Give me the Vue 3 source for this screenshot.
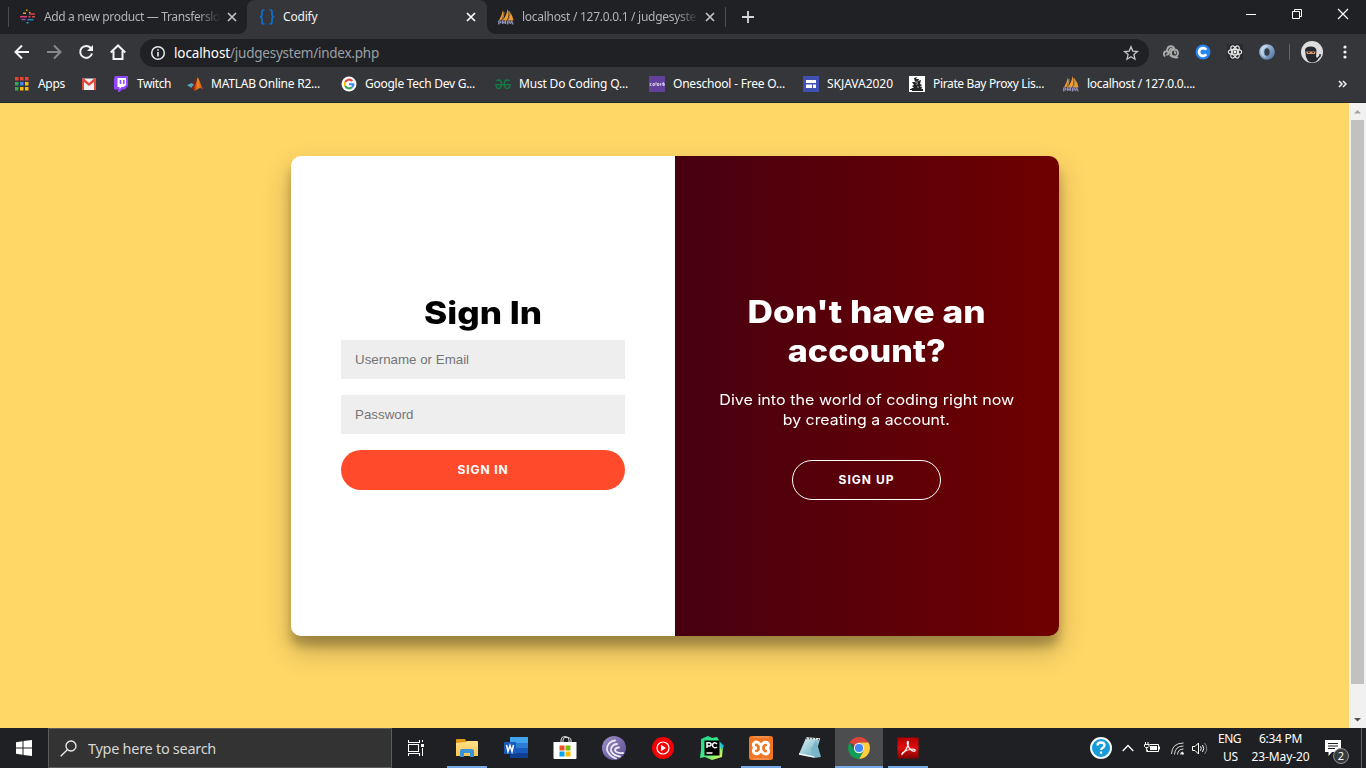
<script setup>
const spread = (el, width) => {
  const natural = el.getBoundingClientRect().width
  el.style.letterSpacing = (width - natural) / el.textContent.length + 'px'
}
const stretch = (el, width) => {
  el.style.display = 'inline-block'
  el.style.transform = `scaleX(${width / el.getBoundingClientRect().width})`
}
const vFit = { mounted: (el, { value, modifiers }) => (modifiers.wide ? stretch : spread)(el, value) }

const tabs = [
  { icon: 'transfer', title: 'Add a new product — Transferslo', width: 176, active: false },
  { icon: 'braces', title: 'Codify', width: 34.5, active: true },
  { icon: 'sails', title: 'localhost / 127.0.0.1 / judgesyste', width: 174, active: false }
]
const bookmarks = [
  { icon: 'apps', title: 'Apps', width: 27 },
  { icon: 'gmail', title: '', width: 0 },
  { icon: 'twitch', title: 'Twitch', width: 34 },
  { icon: 'matlab', title: 'MATLAB Online R2...', width: 109 },
  { icon: 'google', title: 'Google Tech Dev G...', width: 110 },
  { icon: 'geeks', title: 'Must Do Coding Q...', width: 109 },
  { icon: 'colorlib', title: 'Oneschool - Free O...', width: 112 },
  { icon: 'sites', title: 'SKJAVA2020', width: 66 },
  { icon: 'pirate', title: 'Pirate Bay Proxy Lis...', width: 111 },
  { icon: 'sails', title: 'localhost / 127.0.0....', width: 108 }
]
const extensions = ['swirls', 'bluec', 'react', 'ring']
const apps = [
  { icon: 'folder', open: true },
  { icon: 'word' },
  { icon: 'store' },
  { icon: 'torrent' },
  { icon: 'music' },
  { icon: 'pycharm' },
  { icon: 'xampp', open: true },
  { icon: 'notes' },
  { icon: 'chrome', open: true, active: true },
  { icon: 'acrobat', open: true }
]
</script>

<template>
  <div class="screen">
    <svg class="sprite" width="0" height="0">
      <defs>
        <linearGradient id="gFolder" x1="0" y1="0" x2="0" y2="1"><stop offset="0" stop-color="#ffe08a" /><stop offset="1" stop-color="#f8c750" /></linearGradient>
        <linearGradient id="gTorrent" x1="0" y1="0" x2="1" y2="1"><stop offset="0" stop-color="#9d90c8" /><stop offset="1" stop-color="#5b4a90" /></linearGradient>
        <linearGradient id="gNote" x1="0" y1="0" x2="1" y2="1"><stop offset="0" stop-color="#e4f6fa" /><stop offset="1" stop-color="#58a2b5" /></linearGradient>
        <linearGradient id="gAcro" x1="0" y1="0" x2="0" y2="1"><stop offset="0" stop-color="#b30000" /><stop offset=".5" stop-color="#e01010" /><stop offset="1" stop-color="#820000" /></linearGradient>
        <linearGradient id="gPy" x1="0" y1="0" x2="1" y2="1"><stop offset="0" stop-color="#21d789" /><stop offset=".5" stop-color="#3bea8a" /><stop offset="1" stop-color="#fcf84a" /></linearGradient>
        <linearGradient id="gMat" x1="0" y1="0" x2="1" y2="0"><stop offset="0" stop-color="#8c1d12" /><stop offset=".5" stop-color="#f6871f" /><stop offset="1" stop-color="#c43c14" /></linearGradient>
        <linearGradient id="gRing" x1="0" y1="0" x2="1" y2="1"><stop offset="0" stop-color="#c9daf0" /><stop offset="1" stop-color="#456c9d" /></linearGradient>
      </defs>
      <symbol id="transfer" viewBox="0 0 16 16">
        <g fill="none" stroke-width="1.500">
          <path d="M6 1.200h1.500M9 3.500h1.500M3 4.200h3" stroke="#e0a52a" /><path d="M9 5h6" stroke="#d8443c" />
          <path d="M0 7.700h7" stroke="#e0397c" /><path d="M8.500 7.700h2M12 7.700h3" stroke="#c9504c" />
          <path d="M1.500 10.500h4" stroke="#8557a8" /><path d="M7.500 10.700h6" stroke="#2388bd" /><path d="M6.500 13.700h2" stroke="#2f9ec9" />
        </g>
      </symbol>
      <symbol id="braces" viewBox="0 0 16 16">
        <path d="M5.500 1H4.500Q3 1 3 2.800V5.500Q3 7.500 1 7.800 3 8.200 3 10V13Q3 14.800 4.500 14.800H5.500M10.500 1h1Q13 1 13 2.800V5.500Q13 7.500 15 7.800 13 8.200 13 10V13Q13 14.800 11.500 14.800H10.500" fill="none" stroke="#0b6fd0" stroke-width="1.700" />
      </symbol>
      <symbol id="sails" viewBox="0 0 16 16">
        <path d="M5 1Q6 6 3.500 11L1 11.500Q4 6 5 1M9.500 0Q12 6 9 11.500H4.500Q9 6 9.500 0M12 3Q15 7 15.500 11.500H10.500Q13 7 12 3" fill="#f29a2e" />
        <path d="M6 3Q6 7 4.500 10.500M11 2Q13 6 10.500 11" stroke="#ffc36b" fill="none" stroke-width=".7" />
        <path d="M.7 15.500V12h1.500q1.500 1 0 2H1M4.500 15v-3l1.500 2 1.500-2v3M9.500 15.500V12h1.500q1.500 1 0 2h-1M12.500 15l1.200-3 1.500 3.500" fill="none" stroke="#8f91b8" stroke-width="1.200" />
      </symbol>
      <symbol id="apps" viewBox="0 0 14 14">
        <path d="M0 0h3.500v3.500H0zM5 0h3.500v3.500H5zM10 0h3.500v3.500h-3.500z" fill="#ea4335" /><path d="M0 5h3.500v3.500H0zM0 10h3.500v3.500H0z" fill="#34a853" /><path d="M5 5h3.500v3.500H5z" fill="#4285f4" /><path d="M10 5h3.500v3.500h-3.500zM5 10h3.500v3.500H5zM10 10h3.500v3.500h-3.500z" fill="#f5b912" />
      </symbol>
      <symbol id="gmail" viewBox="0 0 14 14">
        <rect y="1.500" width="14" height="11.500" rx="1" fill="#f1f1f1" /><path d="M0 13V2.500Q1 .5 2.500 2L7 6l4.500-4Q13 .5 14 2.500V13h-2V5L7 9 2 5v8z" fill="#e04a3d" />
      </symbol>
      <symbol id="twitch" viewBox="0 0 16 16">
        <path d="M2 0h13v10l-3.500 3.500H9L6.500 16H5v-2.500H1V3z" fill="#9147ff" /><path d="M4.500 2H13v7l-2.500 2H8.500L6.500 13v-2h-2z" fill="#fff" /><path d="M7.500 4v4M10.800 4v4" stroke="#9147ff" stroke-width="1.600" />
      </symbol>
      <symbol id="matlab" viewBox="0 0 16 16">
        <path d="M0 9l5-2 2.500 2L4.500 12z" fill="#4daec0" /><path d="M5 7Q8 5 10.500 1L8 11 5.500 14 4.500 11 7 9z" fill="#7b2419" /><path d="M10.500 1Q12 3 16 13.500 13.500 11 11.500 12.500T7.500 15L6 12Q9 10 10.500 1" fill="url(#gMat)" />
      </symbol>
      <symbol id="google" viewBox="0 0 16 16">
        <circle cx="8" cy="8" r="7.500" fill="#fff" /><g fill="none" stroke-width="2.100">
          <path d="M11.300 5A4.400 4.400 0 0 0 4.200 6" stroke="#ea4335" /><path d="M4.200 6a4.400 4.400 0 0 0 0 4" stroke="#fbbc05" /><path d="M4.200 10a4.400 4.400 0 0 0 6.800 1.300" stroke="#34a853" /><path d="M11 11.300A4 4 0 0 0 12.400 8.200H8" stroke="#4285f4" /></g>
      </symbol>
      <symbol id="geeks" viewBox="0 0 16 16"><path d="M1.500 5Q2 4 4 4 6.700 4.500 6.700 8T4 12.500Q1 12.500 1 8.700H15Q15 12.500 12 12.500 9.300 12 9.300 8T12 4Q14 4 14.500 5" fill="none" stroke="#147846" stroke-width="1.400" /></symbol>
      <symbol id="colorlib" viewBox="0 0 16 16"><rect width="16" height="16" fill="#61419a" /><path d="M2.500 7.500H1.200v2h1.300M4 7.500h1.400v2H4zM7 6v3.500M8.500 7.500H10v2H8.500zM11.500 9.500v-2H12M13.200 7v2.500M14.300 6v3.500h1v-2h-1" fill="none" stroke="#e8e2f1" stroke-width=".8" /></symbol>
      <symbol id="sites" viewBox="0 0 16 16"><rect width="16" height="16" fill="#3f51b5" /><path d="M3 4h10v3H3zM3 8.500h6V12H3zM10 8.500h3V12h-3z" fill="#fff" /></symbol>
      <symbol id="pirate" viewBox="0 0 16 16"><rect width="16" height="16" fill="#fff" /><path d="M5 2l3-1-1 2 3 0-1 2 3-1-1 4 2 1-2 2 2 0-1 3H4L2 12l3 0-2-2 2-1-2-3 3 0z" fill="#222" /><path d="M1 13.500h13M3 14.500h11" stroke="#222" /><path d="M6 6l3 0M8 11l2 0M7 8.500l2-1" stroke="#aaa" /></symbol>
      <symbol id="swirls" viewBox="0 0 16 16">
        <g fill="none" stroke="#aaa" stroke-width="1.900"><path d="M2 12.500Q-.3 9.500 2 7.500 4.500 6.500 5.500 8.500 5.500 11 3.200 10.500M4 6.500Q4.500 2 8.500 2.300 11.500 3 11 5.500L7.500 5Q5.500 7.500 7.500 9.500" /><circle cx="11.500" cy="9" r="3.500" /><path d="M11 8q2 0 1 2M7 10.500q1 2.500 4 2.500 3 1 4 0" /></g>
      </symbol>
      <symbol id="bluec" viewBox="0 0 16 16"><circle cx="8" cy="8" r="7.500" fill="#2686ef" /><path d="M11.200 5.800A3.900 3.900 0 1 0 11.200 10.200" fill="none" stroke="#fff" stroke-width="2.700" /></symbol>
      <symbol id="react" viewBox="0 0 16 16"><rect width="16" height="16" fill="#2a2b2e" /><g fill="none" stroke="#e4e4e4" stroke-width="1.150"><ellipse cx="8" cy="8" rx="6.700" ry="2.700" /><ellipse cx="8" cy="8" rx="6.700" ry="2.700" transform="rotate(60 8 8)" /><ellipse cx="8" cy="8" rx="6.700" ry="2.700" transform="rotate(120 8 8)" /></g><circle cx="8" cy="8" r="1.400" fill="#fff" /></symbol>
      <symbol id="ring" viewBox="0 0 16 16"><circle cx="8" cy="8" r="7.800" fill="url(#gRing)" /><path d="M7 1Q1 3 2 9 3 13 8 14 4 11 4.500 7 5 3 9 3" fill="#d4e2f2" opacity=".65" /><ellipse cx="8" cy="8" rx="2.600" ry="3.800" fill="#333b48" /></symbol>
      <symbol id="x" viewBox="0 0 10 10"><path d="M1 1l8 8M9 1L1 9" stroke="currentColor" stroke-width="1.700" /></symbol>

      <symbol id="folder" viewBox="0 0 24 24"><path d="M1 4q0-1 1-1h8l1 2h11v4H1z" fill="#df9818" /><path d="M1 7l10-1 1-1h10q1 0 1 1v14H1z" fill="url(#gFolder)" /><path d="M5 21v-6q0-2 2-2h10q2 0 2 2v6h-4v-4H9v4z" fill="#3b91d7" /></symbol>
      <symbol id="word" viewBox="0 0 24 24"><path d="M6 1h18v6H6z" fill="#41a5ee" /><path d="M6 7h18v5H6z" fill="#2b7cd3" /><path d="M6 12h18v5H6z" fill="#185abd" /><path d="M6 17h18v5H6z" fill="#103f91" /><rect y="6" width="12" height="12" rx="1" fill="#185abd" /><path d="M2.500 9l1.500 6.500L6 9.500l2 6L9.500 9" fill="none" stroke="#fff" stroke-width="1.500" /></symbol>
      <symbol id="store" viewBox="0 0 24 24"><path d="M8 6V4q0-3.500 4-3.500T16 4v2M10 6V4Q10 2 12 1.500 18 1 18 4v2" fill="none" stroke="#ddd" stroke-width="1" /><path d="M.5 6h23v16q0 1-1 1h-21q-1 0-1-1z" fill="#fff" /><path d="M6.500 9.500h5v5h-5z" fill="#f25022" /><path d="M12.500 9.500h5v5h-5z" fill="#7fba00" /><path d="M6.500 15.500h5v5h-5z" fill="#00a4ef" /><path d="M12.500 15.500h5v5h-5z" fill="#ffb900" /></symbol>
      <symbol id="torrent" viewBox="0 0 24 24"><circle cx="12" cy="12" r="12" fill="url(#gTorrent)" /><g fill="none" stroke="#eeeaf6" stroke-width="1.800" stroke-linecap="round"><path d="M13 4.500A8.500 8.500 0 0 0 5 14Q7 20 14 22.500M15 8A6 6 0 0 0 9 15Q12 20 18 20.500M17 11.500Q13 11.500 13 14.500 15 17.500 21 17" /></g></symbol>
      <symbol id="music" viewBox="0 0 24 24"><circle cx="12" cy="12" r="11" fill="#f50000" /><circle cx="12" cy="12" r="6" fill="none" stroke="#fff" stroke-width="1.200" /><path d="M10 8.700v6.600l5-3.300z" fill="#fff" /></symbol>
      <symbol id="pycharm" viewBox="0 0 24 24"><path d="M1 3L8 0l4 2 5-1 3 5 3 4-1 11-10 3-7-3-5 1 1-8z" fill="url(#gPy)" /><path d="M20 6l4 4-3 4z" fill="#07c3f2" /><rect x="4.500" y="4.500" width="15" height="15" /><path d="M7 12V6.800h2q2 0 2 1.600T9 10H7M17 8q-1-1.300-2.500-1.200-2 .4-2 2.500t2 2.500Q16 12 17 11M6.500 17h6" fill="none" stroke="#fff" stroke-width="1.500" /></symbol>
      <symbol id="xampp" viewBox="0 0 24 24"><rect width="24" height="24" rx="2.500" fill="#f07624" /><path d="M4 1h16M4 23h16" stroke="#f8a266" /><path d="M8 12Q4 12 4.500 8 6 5 9 6.500L12 9l3-2.500q3.500-1 4.500 2 .5 3.500-3.500 3.500 4 0 3.500 4-1.500 3-4.500 1.500L12 15l-3 2.500q-3.500 1-4.500-2Q4 12 8 12" fill="none" stroke="#fff" stroke-width="2.900" /><path d="M12 9v6" stroke="#fff" stroke-width="2.500" /></symbol>
      <symbol id="notes" viewBox="0 0 24 24"><path d="M8 2l14 1-5 18L1 18z" fill="url(#gNote)" /><path d="M18 4l5 17-7 1-3-9z" fill="#79b6c8" /><path d="M8 2l14 1M1 18l15 3" stroke="#f6ffff" stroke-width="1.300" /><path d="M8 2l1 1M11 2l1 1M14 2l1 1M17 2l1 1M20 3l1 1" stroke="#555" stroke-width="1.200" /></symbol>
      <symbol id="chrome" viewBox="0 0 24 24"><path d="M12 12L2.500 6.500A11 11 0 0 1 21.500 6.500H12z" fill="#db4437" /><path d="M21.500 6.500A11 11 0 0 1 12 23l4.500-8.500-.5-6.300-4-1.700z" fill="#ffcd40" /><path d="M2.500 6.500A11 11 0 0 0 12 23l4.700-8.500L12 17l-4.500-2.500z" fill="#0f9d58" /><circle cx="12" cy="12" r="5.200" fill="#f1f1f1" /><circle cx="12" cy="12" r="4.100" fill="#4285f4" /></symbol>
      <symbol id="acrobat" viewBox="0 0 24 24"><rect x="1.500" y="1.500" width="21" height="21" fill="url(#gAcro)" /><path d="M6 18Q10 15 12 9q1-4-.5-3.500-1 1.500 1.500 6T19 15q1-2-3-2Q11 13.500 7 16.500 5 18.500 6.500 18.700" fill="none" stroke="#fff" stroke-width="1.200" /></symbol>
    </svg>

    <header class="browser">
      <div class="tabstrip">
        <span class="divider"></span>
        <div v-for="t in tabs" :key="t.title" class="tab" :class="{ active: t.active }">
          <svg class="favicon" width="16" height="16"><use :href="'#' + t.icon" /></svg>
          <span class="title"><span v-fit="t.width">{{ t.title }}</span></span>
          <svg class="close" width="10" height="10"><use href="#x" /></svg>
        </div>
        <span class="divider"></span>
        <svg class="plus" width="12" height="12" viewBox="0 0 12 12"><path d="M6 0v12M0 6h12" stroke="#d5d7da" stroke-width="1.800" /></svg>
        <div class="window-buttons">
          <svg width="12" height="12" viewBox="0 0 12 12"><path d="M1 6.500h10" stroke="#fff" /></svg>
          <svg width="12" height="12" viewBox="0 0 12 12"><path d="M1.500 3.500h7v7h-7zM3.500 3.500v-2h7v7h-2" fill="none" stroke="#fff" /></svg>
          <svg width="12" height="12" viewBox="0 0 12 12"><path d="M1 1l10 10M11 1L1 11" stroke="#fff" stroke-width="1.200" /></svg>
        </div>
      </div>

      <div class="toolbar">
        <div class="nav">
          <svg width="16" height="16" viewBox="0 0 16 16"><path d="M15 8H2M8 1.500L1.500 8 8 14.500" fill="none" stroke="#f1f3f4" stroke-width="2" /></svg>
          <svg width="16" height="16" viewBox="0 0 16 16"><path d="M1 8h13M8 1.500L14.500 8 8 14.500" fill="none" stroke="#86888b" stroke-width="2" /></svg>
          <svg width="16" height="16" viewBox="0 0 16 16"><path d="M12.800 4A6 6 0 1 0 14 9.500" fill="none" stroke="#f1f3f4" stroke-width="2" /><path d="M15 1v6H9z" fill="#f1f3f4" /></svg>
          <svg width="16" height="16" viewBox="0 0 16 16"><path d="M.7 8.500L8 1.500l7.300 7M3.500 7v8h9V7" fill="none" stroke="#f1f3f4" stroke-width="2" /></svg>
        </div>
        <div class="address">
          <svg width="16" height="16" viewBox="0 0 16 16"><circle cx="8" cy="8" r="6.300" fill="none" stroke="#e8eaed" stroke-width="1.500" /><path d="M8 7v4.500M8 4.300v1.500" stroke="#e8eaed" stroke-width="1.600" /></svg>
          <span class="url"><span v-fit="56" class="host">localhost</span><span v-fit="149">/judgesystem/index.php</span></span>
          <svg width="16" height="16" viewBox="0 0 16 16"><path d="M8 1.800l1.800 4.300 4.700.4-3.600 3.100 1.100 4.600L8 11.800l-4 2.400 1.100-4.600L1.500 6.500l4.700-.4z" fill="none" stroke="#c5c7ca" stroke-width="1.300" /></svg>
        </div>
        <div class="extensions">
          <svg v-for="e in extensions" :key="e" width="16" height="16"><use :href="'#' + e" /></svg>
        </div>
        <span class="bar"></span>
        <svg class="avatar" width="22" height="22" viewBox="0 0 22 22"><circle cx="11" cy="11" r="11" fill="#dedede" /><path d="M4 9Q4.500 5.500 9.500 5.500q5.500 0 6 4l-.5 6 2 3-2 2q-5 2-8-.5L5 16z" fill="#26282c" /><path d="M5 10.500h9.500l-.5 2.500H6z" fill="#d9986c" /><path d="M7 11.500h1.500M11.500 11.500H13" stroke="#222" /><path d="M15.500 18.500l3.500-3.500v-2" stroke="#222" stroke-width="1.500" fill="none" /></svg>
        <svg class="dots" width="4" height="14" viewBox="0 0 4 14"><circle cx="2" cy="2" r="1.600" fill="#f1f3f4" /><circle cx="2" cy="7" r="1.600" fill="#f1f3f4" /><circle cx="2" cy="12" r="1.600" fill="#f1f3f4" /></svg>
      </div>

      <nav class="bookmarks">
        <a v-for="b in bookmarks" :key="b.title" :class="b.icon">
          <svg><use :href="'#' + b.icon" /></svg>
          <span v-if="b.title" v-fit="b.width">{{ b.title }}</span>
        </a>
        <svg class="more" width="9" height="8" viewBox="0 0 9 8"><path d="M1 1l3 3-3 3M5 1l3 3-3 3" fill="none" stroke="#f1f3f4" stroke-width="1.500" /></svg>
      </nav>
    </header>

    <main class="viewport">
      <div class="page">
        <div class="card">
          <form class="signin" @submit.prevent>
            <h1><span v-fit.wide="118">Sign In</span></h1>
            <input type="text" placeholder="Username or Email" />
            <input type="password" placeholder="Password" />
            <button type="button"><span v-fit="51">SIGN IN</span></button>
          </form>
          <section class="signup">
            <h1><span v-fit.wide="238">Don't have an</span><br /><span v-fit.wide="158">account?</span></h1>
            <p><span v-fit.wide="295">Dive into the world of coding right now</span><br /><span v-fit.wide="167">by creating a account.</span></p>
            <button type="button"><span v-fit="56">SIGN UP</span></button>
          </section>
        </div>
      </div>
      <div class="scrollbar">
        <svg width="17" height="17" viewBox="0 0 17 17"><path d="M5 10.500h7L8.500 7z" fill="#a3a3a3" /></svg>
        <div class="thumb"></div>
        <svg width="17" height="17" viewBox="0 0 17 17"><path d="M5 7h7l-3.500 3.500z" fill="#505050" /></svg>
      </div>
    </main>

    <footer class="taskbar">
      <div class="start"><svg width="16" height="16" viewBox="0 0 16 16"><path d="M0 2.200L6.500 1.300V7.500H0zM7.500 1.100L16 0v7.500H7.500zM0 8.500h6.500v6.200L0 13.800zM7.500 8.500H16V16l-8.500-1.100z" fill="#fff" /></svg></div>
      <div class="search">
        <svg width="17" height="17" viewBox="0 0 17 17"><circle cx="11" cy="6" r="5" fill="none" stroke="#eee" stroke-width="1.300" /><path d="M7.300 9.700L.7 16.300" stroke="#eee" stroke-width="1.300" /></svg>
        <span v-fit="128">Type here to search</span>
      </div>
      <div class="taskview"><svg width="16" height="16" viewBox="0 0 16 16"><path d="M.5 0v2.500h11V0M.5 16v-2.500h11V16M.5 4.500h10v7H.5z" fill="none" stroke="#fff" stroke-width="1.100" /><path d="M14.500 0v2M14.500 8v8" stroke="#fff" /><path d="M13 4h3v3h-3z" fill="#fff" /></svg></div>
      <div class="apps">
        <div v-for="a in apps" :key="a.icon" class="app" :class="{ open: a.open, active: a.active }">
          <svg width="24" height="24"><use :href="'#' + a.icon" /></svg>
        </div>
      </div>
      <div class="tray">
        <svg width="24" height="24" viewBox="0 0 24 24"><circle cx="12" cy="12" r="10" fill="#159bd7" stroke="#f4fafd" stroke-width="2" /><path d="M8.500 9.500Q8.500 6.500 12 6.500t3.500 2.700q0 1.500-2 2.700Q12 12.800 12 14M12 15.500v2.300" fill="none" stroke="#fff" stroke-width="2.300" /></svg>
        <svg width="12" height="8" viewBox="0 0 12 8"><path d="M.7 7L6 1.500 11.300 7" fill="none" stroke="#fff" stroke-width="1.300" /></svg>
        <svg width="17" height="12" viewBox="0 0 17 12"><path d="M5.500 2.500h9v7H3.500V8M15.500 4.500v3" fill="none" stroke="#fff" /><path d="M6 4h7v4H6z" fill="#fff" /><path d="M1.500 0v2M4 0v2M.5 2.500h4.500v2l-1 1H1.500l-1-1zM2.700 5.500v4h1" fill="none" stroke="#fff" /></svg>
        <svg width="13" height="13" viewBox="0 0 13 13"><g fill="none" stroke="#d9d9d9" stroke-width="1"><path d="M.5 12Q1 1 12.500 1M3.500 12.500Q4 4 12.500 4M6.500 12.500Q7 7 12.500 7" /><path d="M9.500 12.500Q9.500 10 12 10" /></g><circle cx="11.500" cy="11.500" r="1.300" fill="#fff" /></svg>
        <svg width="16" height="13" viewBox="0 0 16 13"><path d="M.5 4.500H3L6.500 1v11L3 8.500H.5z" fill="none" stroke="#fff" /><path d="M8.500 4.300q1.500 2.200 0 4.400M10.500 3q2.500 3.500 0 7" fill="none" stroke="#fff" /><path d="M12.500 1q4.500 5.500 0 11" fill="none" stroke="#858585" /></svg>
        <div class="lang"><span v-fit="23">ENG</span><span v-fit="15">US</span></div>
        <div class="clock"><span v-fit="43">6:34 PM</span><span v-fit="58">23-May-20</span></div>
        <div class="notice">
          <svg width="16" height="16" viewBox="0 0 16 16"><path d="M0 0h16v12H7l-3.500 4v-4H0z" fill="#fff" /><path d="M3 3.500h10M3 6h10M3 8.500h7" stroke="#202124" /></svg>
          <b>2</b>
        </div>
        <span class="peek"></span>
      </div>
    </footer>
  </div>
</template>

<style>
body { margin: 0; overflow: hidden; }
</style>

<style scoped>
* { box-sizing: border-box; }
.screen { width: 1366px; height: 768px; display: flex; flex-direction: column; overflow: hidden; font-family: "Noto Sans", "Open Sans", sans-serif; font-size: 12px; color: #fff; }
svg { display: block; flex: none; }
.sprite { position: absolute; }
span { white-space: nowrap; }

.browser { height: 103px; background: #35363a; border-bottom: 1px solid #28292b; flex: none; }
.tabstrip { height: 34px; background: #202124; display: flex; align-items: center; padding-left: 8px; }
.divider { width: 1px; height: 20px; background: #4a4c50; }
.tab { width: 238px; height: 34px; display: flex; align-items: center; padding-left: 11px; color: #b0b3b8; position: relative; }
.tab.active { width: 240px; padding-left: 12px; background: #35363a; border-radius: 8px 8px 0 0; color: #f1f3f4; }
.tab.active::before, .tab.active::after { content: ""; position: absolute; bottom: 0; width: 8px; height: 8px; }
.tab.active::before { left: -8px; background: radial-gradient(circle at 0 0, transparent 7.500px, #35363a 8px); }
.tab.active::after { right: -8px; background: radial-gradient(circle at 100% 0, transparent 7.500px, #35363a 8px); }
.title { width: 177px; margin-left: 8px; line-height: 20px; mask-image: linear-gradient(90deg, #000 87%, transparent); }
.active .title { mask-image: none; }
.close { margin-left: 6px; color: #c2c4c7; }
.active .close { color: #fff; }
.plus { margin-left: 16px; }
.window-buttons { margin-left: auto; display: flex; gap: 34px; padding-right: 17px; margin-top: -6px; }

.toolbar { height: 35px; display: flex; align-items: center; padding: 1px 0 0 14px; }
.nav { display: flex; gap: 16px; }
.address { width: 1009px; height: 28px; margin-left: 14px; padding: 0 10px; border-radius: 14px; background: #202124; display: flex; align-items: center; margin-top: 1px; }
.url { flex: 1; display: flex; margin-left: 8px; font-size: 13.500px; line-height: 20px; color: #9aa0a6; }
.host { color: #fff; }
.extensions { display: flex; gap: 16px; margin-left: 14px; }
.bar { width: 1px; height: 16px; background: #626468; margin-left: 14px; }
.avatar { margin-left: 11px; }
.dots { margin-left: 20px; }

.bookmarks { height: 30px; display: grid; grid-template-columns: 67px 31px 74px 154px 154px 154px 154px 106px 154px 275px 9px; align-items: center; padding-left: 15px; }
.bookmarks a { display: flex; align-items: center; gap: 8px; line-height: 20px; }
.bookmarks a svg { width: 16px; height: 16px; }
.bookmarks .apps { gap: 9px; }
.bookmarks .apps svg, .bookmarks .gmail svg { width: 14px; height: 14px; }

.viewport { height: 625px; display: flex; flex: none; }
.page { width: 1349px; background: #ffd767; padding-top: 53px; overflow: hidden; }
.card { width: 768px; height: 480px; margin: 0 auto 0 291px; display: flex; border-radius: 10px; overflow: hidden; box-shadow: 0 14px 28px rgba(0, 0, 0, .25), 0 10px 10px rgba(0, 0, 0, .22); }
.signin, .signup { width: 384px; display: flex; flex-direction: column; align-items: center; font-family: Inter, sans-serif; }
.signin { background: #fff; color: #000; padding: 137px 50px 0; }
h1 { margin: 0; font-size: 31px; font-weight: 800; line-height: 39px; text-align: center; }
input { width: 284px; height: 39px; margin: 8px 0; border: 0; padding: 12px 15px 12px 14px; background: #eee; font: 13.333px "Liberation Sans", Arial, sans-serif; }
input::placeholder { color: #757575; }
button { height: 40px; border-radius: 20px; color: #fff; font: 700 12px Inter, sans-serif; padding: 0 0 2px; }
.signin button { width: 284px; margin-top: 8px; border: 0; background: #ff4b2b; }
.signup { background: linear-gradient(90deg, #470011, #6f0000); padding: 136px 1px 0 0; }
p { margin: 20px 0 30px; font-size: 14.500px; line-height: 20px; text-align: center; }
.signup button { width: 149px; border: 1px solid #fff; background: transparent; }
.scrollbar { width: 17px; background: #f1f1f1; display: flex; flex-direction: column; align-items: center; }
.thumb { width: 13px; height: 564px; background: #c1c1c1; margin-bottom: 27px; }

.taskbar { height: 40px; background: #1f2023; display: flex; flex: none; }
.start { width: 48px; display: grid; place-items: center; }
.search { width: 344px; border: 1px solid #5c5c5c; background: #333; display: flex; align-items: center; gap: 11px; padding-left: 11px; font-size: 14.500px; color: #d6d6d6; }
.taskview { width: 50px; display: grid; place-items: center; padding-right: 2px; }
.taskbar .apps { display: flex; }
.app { width: 49px; height: 40px; display: grid; place-items: center; position: relative; }
.app.active { width: 48px; margin-left: 1px; background: #4c4d4f; }
.app.open::after { content: ""; position: absolute; bottom: 0; left: 5px; width: 40px; height: 2px; background: #76a9e8; }
.app.active::after { left: 0; width: 48px; }
.tray { width: 277px; margin-left: auto; display: grid; grid-template-columns: 33px 22px 27px 21px 26px 26px 73px 44px 1px; align-items: center; }
.lang, .clock { display: flex; flex-direction: column; align-items: center; line-height: 18px; }
.lang { width: 23px; align-items: flex-end; }
.lang span:last-child { margin-right: 3px; }
.notice { position: relative; padding: 0 0 1px 8px; }
.notice b { position: absolute; left: 16px; top: 8px; width: 16px; height: 16px; border: 1px solid #929292; border-radius: 50%; background: #393a3c; font-size: 11px; font-weight: 400; line-height: 14px; text-align: center; }
.peek { width: 1px; height: 40px; background: #606164; }
</style>
